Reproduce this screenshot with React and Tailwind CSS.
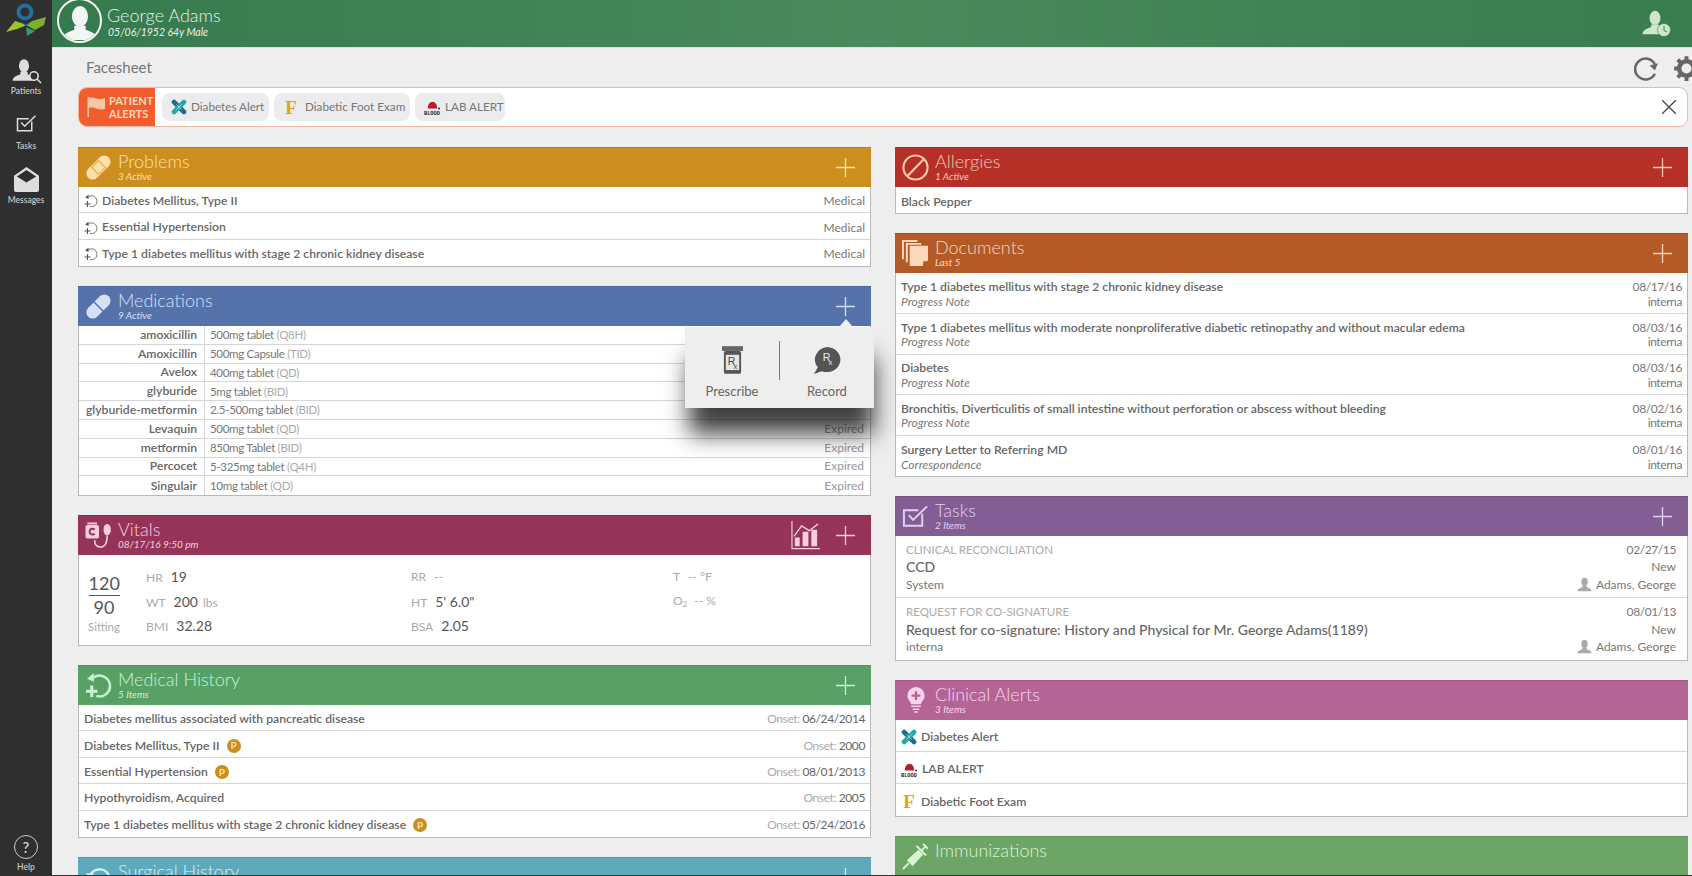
import React from 'react';

const Person = ({ className }) => (
    <svg viewBox="0 0 40 40" className={className} fill="currentColor">
        <ellipse cx="20" cy="13" rx="8.5" ry="11" />
        <path d="M1 38c0-7 8-9 13-11v-4h12v4c5 2 13 4 13 11z" />
    </svg>
);

const HistoryIcon = ({ className, sw = 2.4 }) => (
    <svg viewBox="0 0 26 26" className={className} fill="none" stroke="currentColor">
        <path d="M8 5.5A10 10 0 1 1 11 23" strokeWidth={sw} />
        <path d="M2 6.5 L8.5 1 L8.5 9.5z" fill="currentColor" stroke="none" />
        <path d="M6.5 13v11M1 18.5h11" strokeWidth={sw + 0.6} />
    </svg>
);

const BandAid = ({ className }) => (
    <svg viewBox="0 0 28 28" className={className}>
        <g transform="rotate(-45 14 14)">
            <rect x="-1" y="7.5" width="30" height="13" rx="6.5" fill="currentColor" />
            <rect x="9" y="9" width="10" height="10" fill="none" stroke="#cc8f1f" strokeOpacity="0.6" strokeWidth="1.2" />
        </g>
    </svg>
);

const Pill = ({ className }) => (
    <svg viewBox="0 0 28 28" className={className}>
        <g transform="rotate(-45 14 14)">
            <rect x="-1" y="7.5" width="30" height="13" rx="6.5" fill="currentColor" />
            <path d="M14 6v16" stroke="#5672ab" strokeWidth="1.6" />
        </g>
    </svg>
);

const Cuff = ({ className }) => (
    <svg viewBox="0 0 28 28" className={className}>
        <rect x="0.5" y="3" width="14" height="14" rx="2" fill="currentColor" />
        <rect x="2.5" y="0.5" width="10" height="2" fill="currentColor" />
        <path d="M10 8a3 3 0 1 0 0 4" fill="none" stroke="#963358" strokeWidth="2" />
        <ellipse cx="23" cy="8" rx="3.8" ry="6" fill="currentColor" />
        <path d="M23 14c0 8-2 12-7 12-4 0-6-3-6-7" fill="none" stroke="currentColor" strokeWidth="1.6" />
    </svg>
);

const NoIcon = ({ className }) => (
    <svg viewBox="0 0 28 28" className={className} fill="none" stroke="currentColor" strokeWidth="2.2">
        <circle cx="14" cy="14" r="12.5" />
        <path d="M5.5 23L23 5" />
    </svg>
);

const DocsIcon = ({ className }) => (
    <svg viewBox="0 0 28 28" className={className} fill="currentColor">
        <path d="M0 0h16v2H2v18H0z" />
        <path d="M4 3h16v2H6v18H4z" />
        <path d="M8 6h19v15l-6 6H8z" />
        <path d="M22 27v-5h5" fill="#b35a27" />
    </svg>
);

const TaskIcon = ({ className, sw = 2 }) => (
    <svg viewBox="0 0 28 24" className={className} fill="none" stroke="currentColor" strokeWidth={sw}>
        <path d="M21 8.5V21H2V5h15" />
        <path d="M7 10l4.5 5L26 1" />
    </svg>
);

const Bulb = ({ className }) => (
    <svg viewBox="0 0 20 28" className={className}>
        <path d="M10 0a9 9 0 0 1 9 9c0 4-3 5-4 9H5c-1-4-4-5-4-9a9 9 0 0 1 9-9z" fill="currentColor" />
        <path d="M10 4.5v9M5.5 9h9" stroke="#b56595" strokeWidth="2.4" />
        <path d="M5 20h10M6.5 23h7M8 26h4" stroke="currentColor" strokeWidth="1.6" />
    </svg>
);

const Syringe = ({ className }) => (
    <svg viewBox="0 0 28 28" className={className}>
        <path d="M1 27l6-6" stroke="currentColor" strokeWidth="2" />
        <path d="M5 18L17 7l5 5-11 12z" fill="currentColor" />
        <path d="M15 3l10 10M20 8l5-5M22 1l5 5" stroke="currentColor" strokeWidth="2" fill="none" />
    </svg>
);

const SurgIcon = ({ className }) => (
    <svg viewBox="0 0 26 26" className={className} fill="none" stroke="currentColor">
        <path d="M4 14A10 10 0 0 1 23 11" strokeWidth="2.4" />
        <path d="M1 9 L9 9 L4 16z" fill="currentColor" stroke="none" />
        <circle cx="14" cy="16" r="4" fill="currentColor" stroke="none" />
    </svg>
);

const ChartIcon = ({ className }) => (
    <svg viewBox="0 0 30 30" className={className}>
        <path d="M1 0v28.5h29" fill="none" stroke="currentColor" strokeWidth="1.2" />
        <path d="M4 26V17h5v9zM12 26V11h6v15zM21 26V9h6v17z" fill="currentColor" />
        <path d="M3 16l8-11 8 5 9-7" fill="none" stroke="currentColor" strokeWidth="1.4" />
    </svg>
);

const Plus = ({ className = '' }) => (
    <svg viewBox="0 0 19 19" className={`w-[19px] h-[19px] ${className}`} stroke="currentColor" strokeWidth="1.3">
        <path d="M9.5 0v19M0 9.5h19" />
    </svg>
);

// small coloured alert glyphs
const DiabetesGlyph = () => (
    <svg viewBox="0 0 18 18" className="w-[16px] h-[16px] shrink-0">
        <path d="M3.5 3.5L14.5 14.5" stroke="#16708f" strokeWidth="5.5" strokeLinecap="round" />
        <path d="M14.5 3.5L3.5 14.5" stroke="#27a7a8" strokeWidth="5.5" strokeLinecap="round" />
        <path d="M6 6l6 6M12 6l-6 6" stroke="#bfe6e6" strokeWidth="0.8" />
    </svg>
);

const FootGlyph = () => (
    <span className="w-[16px] h-[16px] shrink-0 flex items-center justify-center text-[19px] leading-none font-bold text-[#e0a415] [font-family:'Liberation_Serif',serif]">
        F
    </span>
);

const BloodGlyph = () => (
    <svg viewBox="0 0 18 18" className="w-[17px] h-[17px] shrink-0">
        <path d="M4 10c0-3.500 2-7 5-7s5 3.500 5 7z" fill="#b3202a" />
        <circle cx="16" cy="10" r="1" fill="#222" />
        <text x="0" y="16.5" fontSize="5.6" fontWeight="700" fill="#222" fontFamily="Liberation Mono, monospace">BLOOD</text>
    </svg>
);

const Badge = () => (
    <span className="ml-[7px] w-[14px] h-[14px] rounded-full bg-[#c98e1d] text-[#f7e2b0] text-[10px] font-bold inline-flex items-center justify-center shrink-0">
        P
    </span>
);

const Panel = ({ color, tint, title, sub, icon, add = true, extra, children, popup }) => (
    <div className="relative">
        <div className="h-[40px] flex items-center pl-[7px] pr-[16px] border-t border-black/10" style={{ backgroundColor: color, color: tint }}>
            <div className="w-[33px] flex justify-start shrink-0">{icon}</div>
            <div className="flex flex-col -mt-[3px]">
                <span className="text-[18px] leading-[19px] font-light whitespace-nowrap">{title}</span>
                <span className="h-[10px] text-[10px] leading-[10px] italic">{sub}</span>
            </div>
            <div className="ml-auto flex items-center gap-[16px]">
                {extra}
                {add && <Plus />}
            </div>
        </div>
        {children && <div className="bg-white border border-t-0 border-[#b9b9b9]">{children}</div>}
        {popup}
    </div>
);

const Row = ({ children, h = 'h-[26.4px]' }) => (
    <div className={`${h} flex items-center border-b border-[#d5d5d5] last:border-b-0 px-[5px] pt-[3px]`}>{children}</div>
);

const problems = ['Diabetes Mellitus, Type II', 'Essential Hypertension', 'Type 1 diabetes mellitus with stage 2 chronic kidney disease'];

const meds = [
    ['amoxicillin', '500mg tablet', '(Q8H)', ''],
    ['Amoxicillin', '500mg Capsule', '(TID)', ''],
    ['Avelox', '400mg tablet', '(QD)', ''],
    ['glyburide', '5mg tablet', '(BID)', ''],
    ['glyburide-metformin', '2.5-500mg tablet', '(BID)', ''],
    ['Levaquin', '500mg tablet', '(QD)', 'Expired'],
    ['metformin', '850mg Tablet', '(BID)', 'Expired'],
    ['Percocet', '5-325mg tablet', '(Q4H)', 'Expired'],
    ['Singulair', '10mg tablet', '(QD)', 'Expired'],
];

const history = [
    ['Diabetes mellitus associated with pancreatic disease', false, '06/24/2014'],
    ['Diabetes Mellitus, Type II', true, '2000'],
    ['Essential Hypertension', true, '08/01/2013'],
    ['Hypothyroidism, Acquired', false, '2005'],
    ['Type 1 diabetes mellitus with stage 2 chronic kidney disease', true, '05/24/2016'],
];

const docs = [
    ['Type 1 diabetes mellitus with stage 2 chronic kidney disease', 'Progress Note', '08/17/16'],
    ['Type 1 diabetes mellitus with moderate nonproliferative diabetic retinopathy and without macular edema', 'Progress Note', '08/03/16'],
    ['Diabetes', 'Progress Note', '08/03/16'],
    ['Bronchitis, Diverticulitis of small intestine without perforation or abscess without bleeding', 'Progress Note', '08/02/16'],
    ['Surgery Letter to Referring MD', 'Correspondence', '08/01/16'],
];

const tasks = [
    ['CLINICAL RECONCILIATION', 'CCD', 'System', '02/27/15'],
    ['REQUEST FOR CO-SIGNATURE', 'Request for co-signature: History and Physical for Mr. George Adams(1189)', 'interna', '08/01/13'],
];

const Vital = ({ label, value, unit, valueClass = 'text-[14px] text-[#555]' }) => (
    <div className="flex items-baseline gap-[8px]">
        <span className="text-[12px] text-[#aaa]">{label}</span>
        <span className={valueClass}>{value}</span>
        {unit && <span className="text-[12px] text-[#aaa] -ml-[3px]">{unit}</span>}
    </div>
);

const RxPopup = () => (
    <>
        <div className="absolute z-10 left-[761px] top-[33px] w-0 h-0 border-x-[7px] border-x-transparent border-b-[8px] border-b-[#eeeeee]" />
        <div className="absolute z-10 left-[607px] top-[41px] w-[189px] h-[81px] bg-[#eeeeee] flex items-start shadow-[2px_28px_22px_-2px_rgba(0,0,0,0.75)]">
            <div className="w-[94px] pt-[19px] flex flex-col items-center gap-[7px] text-[13px] text-[#666]">
                <svg viewBox="0 0 22 30" className="w-[21px] h-[29px]">
                    <rect x="0" y="0" width="22" height="5" fill="#666" />
                    <rect x="2" y="5" width="18" height="24" rx="2" fill="#555" />
                    <rect x="4" y="9" width="14" height="16" fill="#e5e5e5" />
                    <text x="6" y="20" fontSize="11" fill="#444" fontFamily="Liberation Sans, sans-serif">R</text>
                    <text x="12" y="24" fontSize="8" fill="#444" fontFamily="Liberation Sans, sans-serif">x</text>
                </svg>
                <span>Prescribe</span>
            </div>
            <div className="w-px h-[39px] bg-[#777] mt-[14px]" />
            <div className="flex-1 pt-[19px] flex flex-col items-center gap-[7px] text-[13px] text-[#666]">
                <svg viewBox="0 0 30 30" className="w-[29px] h-[29px]">
                    <path d="M15 1a14 13 0 1 1-6 25L1 29l4-7A14 13 0 0 1 15 1z" fill="#555" />
                    <text x="10" y="15" fontSize="11" fill="#eee" fontFamily="Liberation Sans, sans-serif">R</text>
                    <text x="16" y="20" fontSize="8" fill="#eee" fontFamily="Liberation Sans, sans-serif">x</text>
                </svg>
                <span>Record</span>
            </div>
        </div>
    </>
);

const NavItem = ({ icon, label, className = '', labelClass = 'mt-[3px]' }) => (
    <div className={`flex flex-col items-center text-[#c4c4c4] text-[8.5px] leading-[11px] font-semibold ${className}`}>
        {icon}
        <span className={labelClass}>{label}</span>
    </div>
);

const AlertTag = ({ icon, label, w, gap = 'gap-[4px]' }) => (
    <div className={`${w} h-[28px] bg-[#ececec] rounded-[8px] flex items-center ${gap} pl-[9px] text-[11.7px] text-[#777]`}>
        {icon}
        <span className="whitespace-nowrap">{label}</span>
    </div>
);

export default function App() {
    return (
        <div className="h-screen flex flex-col overflow-hidden bg-[#eeeeee] [font-family:Lato,'Open_Sans',sans-serif]">
            <div className="flex-1 flex min-h-0">
                <aside className="w-[52px] shrink-0 bg-[#2f2f2f] flex flex-col items-center">
                    <svg viewBox="0 0 42 34" className="w-[42px] h-[34px] mt-[3px]">
                        <circle cx="20" cy="9" r="6.5" fill="none" stroke="#1f6f9f" strokeWidth="4" />
                        <path d="M1 29L10 18l12 4-10 4z" fill="#9fc22e" />
                        <path d="M41 14l-14 4-6 4 9 5 9-5z" fill="#7fb02a" />
                        <path d="M14 18l7 3 6-3-6 5z" fill="#1d5f8f" />
                        <path d="M21 24l9 4-8 5z" fill="#2f9f6f" />
                    </svg>
                    <NavItem
                        className="mt-[20px]"
                        label="Patients"
                        icon={
                            <div className="relative w-[27px] h-[26px] text-[#ddd]">
                                <Person className="w-[24px] h-[26px]" />
                                <svg viewBox="0 0 14 14" className="absolute right-[-3px] bottom-[-1px] w-[14px] h-[14px]" fill="#2f2f2f" stroke="#ddd" strokeWidth="1.6">
                                    <circle cx="6" cy="6" r="4.2" />
                                    <path d="M9 9l4 4" />
                                </svg>
                            </div>
                        }
                    />
                    <NavItem className="mt-[18px]" labelClass="mt-[8px]" label="Tasks" icon={<TaskIcon className="w-[21px] h-[18px] text-[#ddd]" />} />
                    <NavItem
                        className="mt-[15px]"
                        label="Messages"
                        icon={
                            <svg viewBox="0 0 26 26" className="w-[25px] h-[25px]">
                                <path d="M0 9L13 0l13 9v15a2 2 0 0 1-2 2H2a2 2 0 0 1-2-2z" fill="#ddd" />
                                <path d="M3 10l10-7 10 7-10 6z" fill="#2f2f2f" />
                            </svg>
                        }
                    />
                    <NavItem
                        className="mt-auto mb-[2px]"
                        label="Help"
                        icon={
                            <div className="w-[24px] h-[24px] rounded-full border-[1.5px] border-[#ccc] text-[#ccc] text-[15px] leading-none flex items-center justify-center">
                                ?
                            </div>
                        }
                    />
                </aside>

                <div className="flex-1 min-w-0 flex flex-col">
                    <header className="h-[48px] shrink-0 flex items-center pl-[5px] pr-[21px] border-b border-[#cfe8cf] bg-gradient-to-r from-[#357a4e] via-[#4a8a5b] to-[#397c4e] overflow-hidden">
                        <div className="w-[45px] h-[45px] shrink-0 rounded-full border-[2.5px] border-[#f2f7f2] overflow-hidden flex items-end justify-center text-[#f2f7f2] -mt-[6px]">
                            <Person className="w-[38px] h-[38px] -mb-[1px]" />
                        </div>
                        <div className="ml-[5px] text-[#e6f3ea]">
                            <div className="text-[18px] leading-[20px] font-light -mt-[4px]">George Adams</div>
                            <div className="text-[10.5px] leading-[13px] italic pl-[1px] mt-[1px]">05/06/1952 64y Male</div>
                        </div>
                        <div className="ml-auto relative w-[29px] h-[28px] text-[#cde6cd] -mt-[2px]">
                            <Person className="w-[26px] h-[27px]" />
                            <svg viewBox="0 0 14 14" className="absolute right-0 bottom-0 w-[14px] h-[14px]">
                                <circle cx="7" cy="7" r="6.5" fill="#cde6cd" stroke="#3d7f50" strokeWidth="0.6" />
                                <path d="M7 3v4.5l3 1.500" fill="none" stroke="#3d7f50" strokeWidth="1" />
                            </svg>
                        </div>
                    </header>

                    <div className="h-[39px] shrink-0 flex items-center pl-[34px] -mr-[8px]">
                        <span className="text-[15px] text-[#777]">Facesheet</span>
                        <div className="ml-auto flex items-center gap-[15px] mt-[2px]">
                            <svg viewBox="0 0 24 24" className="w-[25px] h-[25px]" fill="none" stroke="#666" strokeWidth="2.4">
                                <path d="M21 8A10 10 0 1 0 21 17" />
                                <path d="M24 7L16 9l5 5z" fill="#666" stroke="none" />
                            </svg>
                            <svg viewBox="0 0 24 24" className="w-[27px] h-[27px]" fill="none" stroke="#666">
                                <circle cx="12" cy="12" r="6.5" strokeWidth="4" />
                                <path d="M12 1v4M12 19v4M1 12h4M19 12h4M4.2 4.2l2.8 2.8M17 17l2.8 2.8M4.2 19.8L7 17M17 7l2.8-2.8" strokeWidth="3.5" />
                            </svg>
                        </div>
                    </div>

                    <div className="ml-[26px] mr-[4px] h-[40px] shrink-0 flex items-center bg-white border border-[#eeb9a2] rounded-[9px] overflow-hidden">
                        <div className="w-[76px] h-full bg-[#f15d2c] flex items-center pl-[8px] gap-[3px] shrink-0">
                            <svg viewBox="0 0 18 20" className="w-[19px] h-[20px] shrink-0" fill="#f9c7a5">
                                <path d="M0 0h1.5v20H0z" />
                                <path d="M1.5 1c5-2 8 3 16 0l0 11c-7 2-11-3-16-1z" />
                            </svg>
                            <div className="text-[11px] leading-[13px] font-bold text-[#ffd9bf]">
                                PATIENT
                                <br />
                                ALERTS
                            </div>
                        </div>
                        <div className="flex items-center gap-[5px] ml-[7px]">
                            <AlertTag w="w-[107px]" icon={<DiabetesGlyph />} label="Diabetes Alert" />
                            <AlertTag w="w-[136px]" gap="gap-[6px]" icon={<FootGlyph />} label="Diabetic Foot Exam" />
                            <AlertTag w="w-[90px]" icon={<BloodGlyph />} label="LAB ALERT" />
                        </div>
                        <svg viewBox="0 0 14 14" className="w-[14px] h-[14px] ml-auto mr-[11px]" stroke="#444" strokeWidth="1.3">
                            <path d="M0 0l14 14M14 0L0 14" />
                        </svg>
                    </div>

                    <div className="flex-1 min-h-0 overflow-hidden ml-[26px] mr-[4px] mt-[20px] flex gap-[24px] items-start">
                        <div className="w-[793px] shrink-0 flex flex-col gap-[19px]">
                            <Panel color="#cc8f1f" tint="#fde0ab" title="Problems" sub="3 Active" icon={<BandAid className="w-[27px] h-[27px]" />}>
                                {problems.map((p) => (
                                    <Row key={p}>
                                        <HistoryIcon className="w-[14px] h-[14px] text-[#555] shrink-0" sw={1.5} />
                                        <span className="ml-[4px] text-[12.2px] font-semibold text-[#666]">{p}</span>
                                        <span className="ml-auto text-[12px] text-[#777]">Medical</span>
                                    </Row>
                                ))}
                            </Panel>

                            <Panel color="#5672ab" tint="#d5e0f5" title="Medications" sub="9 Active" icon={<Pill className="w-[27px] h-[27px]" />} popup={<RxPopup />}>
                                {meds.map(([name, dose, freq, status]) => (
                                    <div key={name} className="h-[18.78px] flex items-center border-b border-[#d5d5d5] last:border-b-0">
                                        <div className="w-[126px] h-full flex items-center justify-end pr-[7px] border-r border-[#d5d5d5] text-[12.2px] font-semibold text-[#666] shrink-0 whitespace-nowrap">
                                            {name}
                                        </div>
                                        <div className="pl-[5px] text-[11.5px] tracking-[-0.3px] text-[#777]">
                                            {dose} <span className="text-[#aaa]">{freq}</span>
                                        </div>
                                        <span className="ml-auto pr-[6px] text-[12px] text-[#999]">{status}</span>
                                    </div>
                                ))}
                            </Panel>

                            <Panel
                                color="#963358"
                                tint="#f3cfe0"
                                title="Vitals"
                                sub="08/17/16 9:50 pm"
                                icon={<Cuff className="w-[27px] h-[27px]" />}
                                extra={<ChartIcon className="w-[29px] h-[29px]" />}
                            >
                                <div className="h-[90px] flex items-center">
                                    <div className="w-[67px] shrink-0 pr-[17px] mt-[7px] flex flex-col items-center text-[#555]">
                                        <div className="w-[31px] text-center text-[18px] leading-[24px] border-b border-[#555]">120</div>
                                        <div className="text-[18px] leading-[22px]">90</div>
                                        <div className="text-[11.5px] leading-[18px] text-[#aaa]">Sitting</div>
                                    </div>
                                    <div className="flex-1 grid grid-cols-[265px_262px_1fr] auto-rows-[24.5px] items-center mt-[2px]">
                                        <Vital label="HR" value="19" />
                                        <Vital label="RR" value="--" valueClass="text-[12px] text-[#aaa]" />
                                        <Vital label="T" value="-- °F" valueClass="text-[12px] text-[#aaa]" />
                                        <Vital label="WT" value="200" unit="lbs" />
                                        <Vital label="HT" value={'5\' 6.0"'} />
                                        <div className="flex items-baseline gap-[7px] text-[12px] text-[#aaa]">
                                            <span>
                                                O<sub className="text-[8px]">2</sub>
                                            </span>
                                            <span>-- %</span>
                                        </div>
                                        <Vital label="BMI" value="32.28" />
                                        <Vital label="BSA" value="2.05" />
                                    </div>
                                </div>
                            </Panel>

                            <Panel color="#57a066" tint="#c9f2d2" title="Medical History" sub="5 Items" icon={<HistoryIcon className="w-[27px] h-[27px]" />}>
                                {history.map(([name, badge, onset]) => (
                                    <Row key={name}>
                                        <span className="text-[12.2px] font-semibold text-[#666]">{name}</span>
                                        {badge && <Badge />}
                                        <span className="ml-auto text-[12px] tracking-[-0.4px] text-[#666]">
                                            <span className="text-[#aaa]">Onset:</span> {onset}
                                        </span>
                                    </Row>
                                ))}
                            </Panel>

                            <Panel color="#5fa9bc" tint="#d4f0f6" title="Surgical History" icon={<SurgIcon className="w-[27px] h-[27px]" />} />
                        </div>

                        <div className="flex-1 min-w-0 flex flex-col gap-[19px]">
                            <Panel color="#b53127" tint="#f9c8b4" title="Allergies" sub="1 Active" icon={<NoIcon className="w-[27px] h-[27px]" />}>
                                <Row>
                                    <span className="text-[12.2px] font-semibold text-[#666]">Black Pepper</span>
                                </Row>
                            </Panel>

                            <Panel color="#b35a27" tint="#fad9bd" title="Documents" sub="Last 5" icon={<DocsIcon className="w-[27px] h-[27px]" />}>
                                {docs.map(([name, kind, date]) => (
                                    <div key={name + date} className="h-[40.6px] flex justify-between items-center border-b border-[#d5d5d5] last:border-b-0 px-[5px] pt-[3px]">
                                        <div className="leading-[14.5px]">
                                            <div className="text-[12.2px] font-semibold text-[#666]">{name}</div>
                                            <div className="text-[12px] italic text-[#777]">{kind}</div>
                                        </div>
                                        <div className="text-right text-[12px] leading-[14.5px] tracking-[-0.4px] text-[#777]">
                                            <div>{date}</div>
                                            <div>interna</div>
                                        </div>
                                    </div>
                                ))}
                            </Panel>

                            <Panel color="#835e94" tint="#e3cff0" title="Tasks" sub="2 Items" icon={<TaskIcon className="w-[27px] h-[24px]" />}>
                                {tasks.map(([kind, name, by, date]) => (
                                    <div key={kind} className="h-[62px] flex justify-between items-center border-b border-[#d5d5d5] last:border-b-0 pl-[10px] pr-[11px]">
                                        <div className="leading-[17.5px]">
                                            <div className="text-[11.5px] text-[#aaa]">{kind}</div>
                                            <div className="text-[14px] font-medium text-[#666]">{name}</div>
                                            <div className="text-[12px] text-[#777]">{by}</div>
                                        </div>
                                        <div className="flex flex-col items-end text-[12px] leading-[17.5px] text-[#777]">
                                            <div className="tracking-[-0.4px]">{date}</div>
                                            <div>New</div>
                                            <div className="flex items-center gap-[4px]">
                                                <Person className="w-[15px] h-[15px] text-[#aaa]" />
                                                Adams, George
                                            </div>
                                        </div>
                                    </div>
                                ))}
                            </Panel>

                            <Panel color="#b56595" tint="#f8d4ea" title="Clinical Alerts" sub="3 Items" add={false} icon={<Bulb className="w-[20px] h-[27px] ml-[4px]" />}>
                                {[
                                    [<DiabetesGlyph key="d" />, 'Diabetes Alert'],
                                    [<BloodGlyph key="b" />, 'LAB ALERT'],
                                    [<FootGlyph key="f" />, 'Diabetic Foot Exam'],
                                ].map(([icon, label]) => (
                                    <Row key={label} h="h-[32px]">
                                        {icon}
                                        <span className="ml-[4px] text-[12.2px] font-semibold text-[#666]">{label}</span>
                                    </Row>
                                ))}
                            </Panel>

                            <Panel color="#6da567" tint="#d7f5d0" title="Immunizations" add={false} icon={<Syringe className="w-[27px] h-[27px]" />} />
                        </div>
                    </div>
                </div>
            </div>
            <div className="h-px shrink-0 bg-[#333]" />
        </div>
    );
}
